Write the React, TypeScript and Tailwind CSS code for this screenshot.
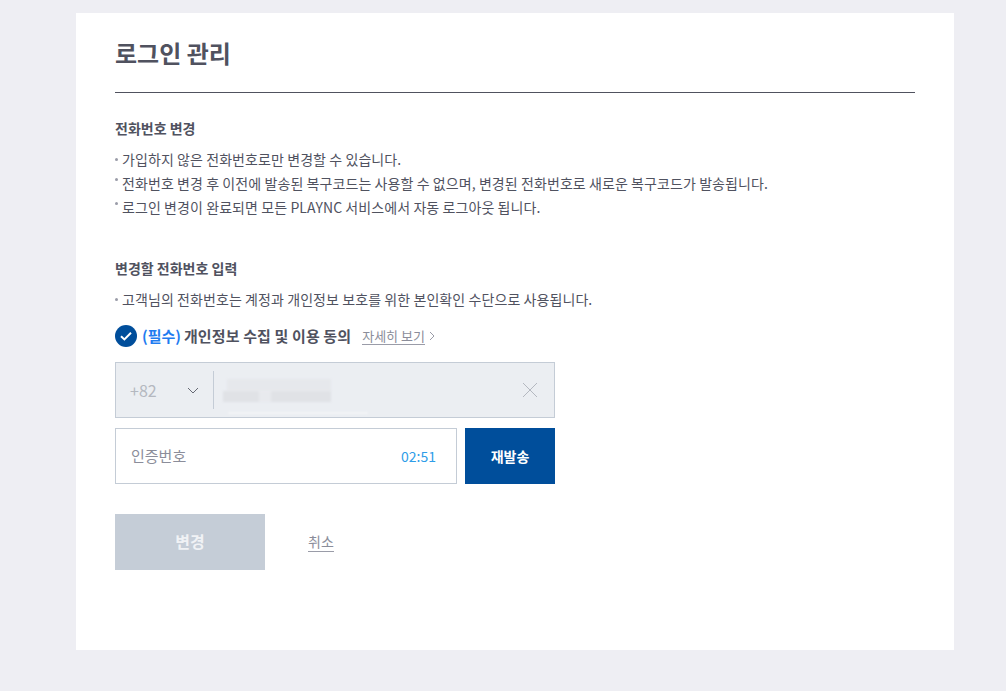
const Bullet = ({ high, children }: { high?: boolean; children: React.ReactNode }) => (
  <li className="relative h-6 pl-[7px] text-[14px] leading-6 tracking-[0.08px] text-[#50525f]">
    <span className={high ? 'absolute left-0 top-[7px] h-[3px] w-[3px] rounded-full bg-[#9a9ca8]' : 'absolute left-0 top-[11px] h-[3px] w-[3px] rounded-full bg-[#9a9ca8]'} />
    {children}
  </li>
);

export default function App() {
  return (
    <div className="h-[691px] overflow-hidden bg-[#eeeef3] pl-[76px] pt-[13px] font-['Noto_Sans_CJK_KR','Noto_Sans',sans-serif]">
      <main className="h-[637px] w-[878px] bg-white px-[39px]">
        <h1 className="h-[80px] border-b border-[#50525f] pt-[20px] text-[24px] font-bold leading-[40px] text-[#50525f]">
          로그인 관리
        </h1>

        <h2 className="mt-[25px] text-[14px] font-bold leading-5 text-[#50525f]">전화번호 변경</h2>
        <ul className="mt-[9px]">
          <Bullet>가입하지 않은 전화번호로만 변경할 수 있습니다.</Bullet>
          <Bullet high>전화번호 변경 후 이전에 발송된 복구코드는 사용할 수 없으며, 변경된 전화번호로 새로운 복구코드가 발송됩니다.</Bullet>
          <Bullet high>로그인 변경이 완료되면 모든 PLAYNC 서비스에서 자동 로그아웃 됩니다.</Bullet>
        </ul>

        <h2 className="mt-[39px] text-[14px] font-bold leading-5 text-[#50525f]">변경할 전화번호 입력</h2>
        <ul className="mt-[9px]">
          <Bullet>고객님의 전화번호는 계정과 개인정보 보호를 위한 본인확인 수단으로 사용됩니다.</Bullet>
        </ul>

        <div className="mt-[13px] flex h-[24px] items-center">
          <span className="flex h-[22px] w-[22px] items-center justify-center rounded-full bg-[#004e9b]">
            <svg width="14" height="12" viewBox="0 0 14 12" fill="none">
              <path d="M2 6.2 5.4 9.4 12 2.8" stroke="#fff" strokeWidth="2" />
            </svg>
          </span>
          <span className="ml-[5px] text-[15px] font-bold text-[#1f7cf0]">(필수)</span>
          <span className="ml-[3px] text-[15px] font-bold tracking-[0.12px] text-[#50525f]">개인정보 수집 및 이용 동의</span>
          <a className="ml-[11px] border-b border-[#9a9ca8] text-[13px] leading-[16px] text-[#8b8d9a]">자세히 보기</a>
          <svg className="ml-[4px]" width="6" height="10" viewBox="0 0 6 10" fill="none">
            <path d="M1 1l4 4-4 4" stroke="#9a9ca8" />
          </svg>
        </div>

        <div className="relative mt-[14px] flex h-14 w-[440px] items-center border border-[#c4ccd6] bg-[#ebeef2]">
          <span className="ml-[14px] w-[57px] text-[16px] text-[#b4b8c0]">+82</span>
          <svg width="12" height="7" viewBox="0 0 12 7" fill="none">
            <path d="M1 1l5 5 5-5" stroke="#666974" />
          </svg>
          <span className="ml-[14px] h-[38px] w-px bg-[#c4ccd6]" />
          <div className="ml-[9px] flex-1">
            <div className="ml-[4px] h-3 w-[104px] bg-[#e6e8ec] blur-[1px]" />
            <div className="flex h-[11px] w-[108px] gap-3 bg-[#e8eaee] blur-[1px]">
              <div className="w-[36px] bg-[#e0e2e6]" />
              <div className="flex-1 bg-[#e0e2e6]" />
            </div>
          </div>
          <svg className="mr-[16px]" width="16" height="16" viewBox="0 0 16 16" fill="none">
            <path d="M1 1l14 14M15 1 1 15" stroke="#b4b8c0" />
          </svg>
          <div className="absolute bottom-[3px] left-[112px] h-[2px] w-[140px] bg-[#f3f5f7] blur-[1px]" />
        </div>

        <div className="mt-[10px] flex gap-2">
          <div className="flex h-14 w-[342px] items-center justify-between border border-[#c4ccd6] bg-white px-[15px]">
            <span className="text-[15px] text-[#8b8d9a]">인증번호</span>
            <span className="mr-[5px] text-[14px] text-[#2f9de8]">02:51</span>
          </div>
          <button className="h-14 w-[90px] bg-[#004e9b] text-[14px] font-bold text-white">재발송</button>
        </div>

        <div className="mt-[30px] flex items-center">
          <button className="h-14 w-[150px] bg-[#c5cdd7] pb-[2px] text-[16px] font-bold text-[#f0f2f5]">변경</button>
          <a className="mb-[2px] ml-[43px] border-b border-[#9a9ca8] text-[14px] leading-[20px] text-[#8b8d9a]">취소</a>
        </div>
      </main>
    </div>
  );
}
